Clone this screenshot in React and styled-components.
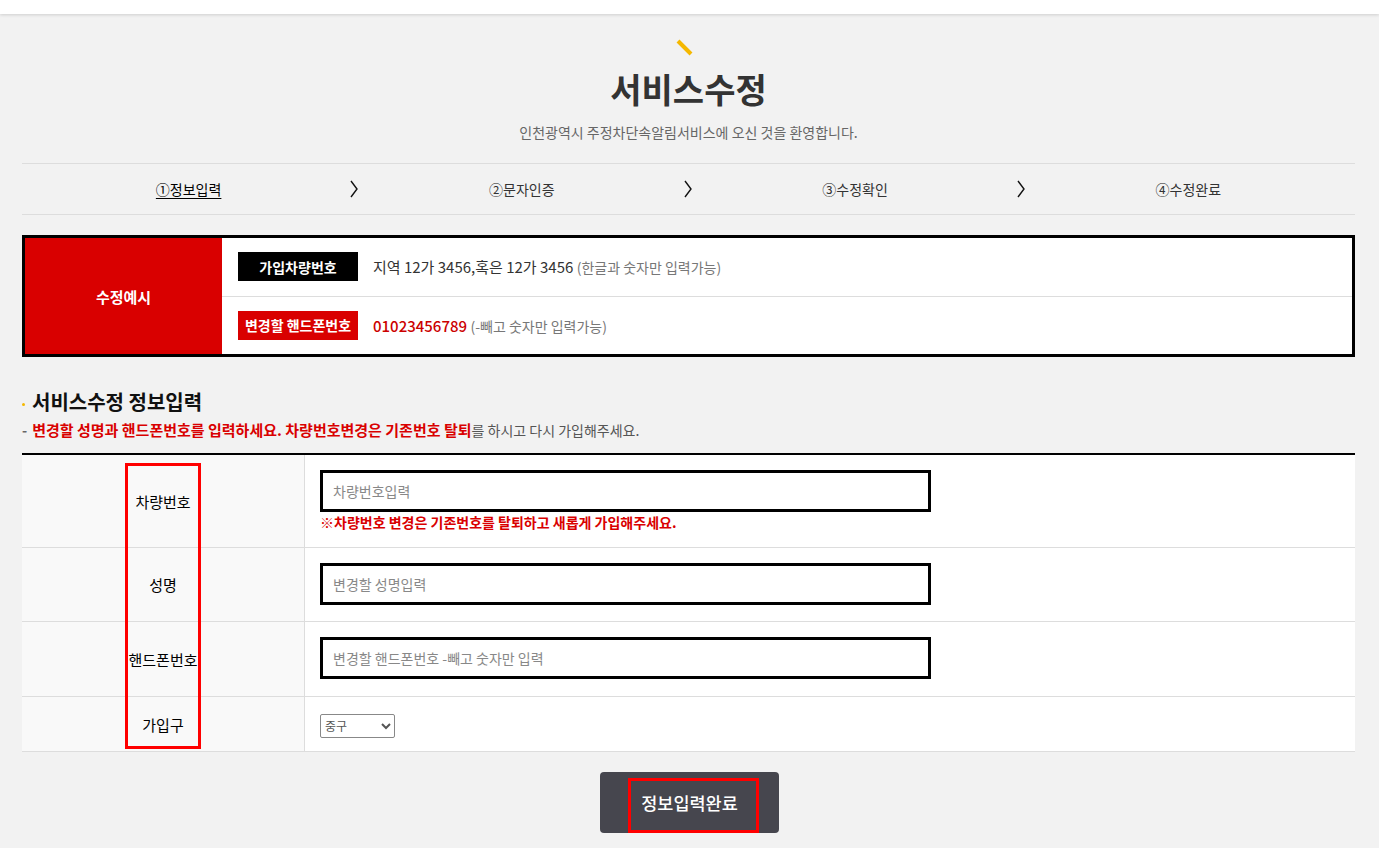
import styled, { createGlobalStyle } from "styled-components";

const GlobalStyle = createGlobalStyle`
  html, body {
    margin: 0;
    padding: 0;
    background: #f2f2f2;
    font-family: "Noto Sans CJK KR", "Noto Sans", sans-serif;
    color: #333;
  }
  * { box-sizing: border-box; }
`;

const steps = ["①정보입력", "②문자인증", "③수정확인", "④수정완료"];

const formRows = [
  { label: "차량번호", height: 93, placeholder: "차량번호입력", note: "※차량번호 변경은 기존번호를 탈퇴하고 새롭게 가입해주세요." },
  { label: "성명", height: 74, placeholder: "변경할 성명입력" },
  { label: "핸드폰번호", height: 75, placeholder: "변경할 핸드폰번호 -빼고 숫자만 입력" },
  { label: "가입구", height: 55, select: true },
];

const Chevron = () => (
  <svg width="10" height="18" viewBox="0 0 10 18">
    <polyline points="2,1 8,9 2,17" fill="none" stroke="#111" strokeWidth="1.4" />
  </svg>
);

const App = () => {
  return (
    <>
      <GlobalStyle />
      <TopBar />
      <Page>
        <Slash>
          <svg width="18" height="18" viewBox="0 0 18 18">
            <line x1="2" y1="2" x2="15" y2="15" stroke="#f5b800" strokeWidth="4" />
          </svg>
        </Slash>
        <Title>서비스수정</Title>
        <Subtitle>인천광역시 주정차단속알림서비스에 오신 것을 환영합니다.</Subtitle>

        <StepBar>
          {steps.map((s, i) => (
            <Step key={s}>
              <StepText $active={i === 0}>{s}</StepText>
              {i < steps.length - 1 && (
                <ChevronWrap>
                  <Chevron />
                </ChevronWrap>
              )}
            </Step>
          ))}
        </StepBar>

        <ExampleBox>
          <ExampleHead>수정예시</ExampleHead>
          <ExampleBody>
            <ExampleRow>
              <Badge $color="#000">가입차량번호</Badge>
              <ExampleText>
                지역 12가 3456,혹은 12가 3456 <Hint>(한글과 숫자만 입력가능)</Hint>
              </ExampleText>
            </ExampleRow>
            <ExampleRow>
              <Badge $color="#d90000">변경할 핸드폰번호</Badge>
              <ExampleText>
                <RedNum>01023456789</RedNum> <Hint>(-빼고 숫자만 입력가능)</Hint>
              </ExampleText>
            </ExampleRow>
          </ExampleBody>
        </ExampleBox>

        <SectionTitle>
          <Dot />
          서비스수정 정보입력
        </SectionTitle>
        <Notice>
          <Dash>-</Dash>
          <strong>변경할 성명과 핸드폰번호를 입력하세요. 차량번호변경은 기존번호 탈퇴</strong>
          <span>를 하시고 다시 가입해주세요.</span>
        </Notice>

        <FormTable>
          {formRows.map((r) => (
            <FormRow key={r.label} $h={r.height}>
              <LabelCell>{r.label}</LabelCell>
              <FieldCell>
                {r.select ? (
                  <Select defaultValue="중구">
                    <option>중구</option>
                  </Select>
                ) : (
                  <Input placeholder={r.placeholder} />
                )}
                {r.note && <Warn>{r.note}</Warn>}
              </FieldCell>
            </FormRow>
          ))}
          <LabelHighlight />
        </FormTable>

        <ButtonRow>
          <SubmitButton>
            정보입력완료
            <ButtonHighlight />
          </SubmitButton>
        </ButtonRow>
      </Page>
    </>
  );
};

export default App;

const TopBar = styled.div`
  height: 14px;
  background: #fff;
  box-shadow: 0 1px 3px rgba(0, 0, 0, 0.15);
`;

const Page = styled.div`
  margin: 0 24px 0 22px;
  padding-bottom: 40px;
`;

const Slash = styled.div`
  display: flex;
  justify-content: center;
  padding-top: 25px;
  padding-right: 7px;
  height: 43px;
`;

const Title = styled.h1`
  margin: 10px 0 0;
  text-align: center;
  font-size: 34px;
  font-weight: 700;
  line-height: 44px;
  color: #333;
`;

const Subtitle = styled.p`
  margin: 11px 0 0;
  text-align: center;
  font-size: 14px;
  line-height: 20px;
  color: #666;
`;

const StepBar = styled.div`
  margin-top: 21px;
  height: 52px;
  border-top: 1px solid #dddddd;
  border-bottom: 1px solid #dddddd;
  display: grid;
  grid-template-columns: repeat(4, 1fr);
`;

const Step = styled.div`
  position: relative;
  display: flex;
  align-items: center;
  justify-content: center;
`;

const StepText = styled.span`
  font-size: 14px;
  color: ${(p) => (p.$active ? "#000" : "#333")};
  text-decoration: ${(p) => (p.$active ? "underline" : "none")};
  text-underline-offset: 3px;
`;

const ChevronWrap = styled.span`
  position: absolute;
  right: -4px;
  top: 50%;
  transform: translateY(-50%);
  display: flex;
`;

const ExampleBox = styled.div`
  margin-top: 20px;
  display: flex;
  border: 3px solid #000;
  height: 122px;
  background: #fff;
`;

const ExampleHead = styled.div`
  width: 197px;
  background: #d90000;
  color: #fff;
  font-size: 15px;
  font-weight: 700;
  display: flex;
  align-items: center;
  justify-content: center;
`;

const ExampleBody = styled.div`
  flex: 1;
  display: flex;
  flex-direction: column;
`;

const ExampleRow = styled.div`
  flex: 1;
  display: flex;
  align-items: center;
  padding-left: 16px;
  gap: 15px;
  & + & {
    border-top: 1px solid #dddddd;
  }
`;

const Badge = styled.span`
  width: 120px;
  height: 29px;
  display: flex;
  align-items: center;
  justify-content: center;
  background: ${(p) => p.$color};
  color: #fff;
  font-size: 14px;
  font-weight: 700;
`;

const ExampleText = styled.span`
  font-size: 15px;
  color: #333;
`;

const Hint = styled.span`
  font-size: 14px;
  color: #777;
`;

const RedNum = styled.span`
  font-size: 15px;
  font-weight: 500;
  color: #cc0000;
`;

const SectionTitle = styled.h2`
  margin: 32px 0 0;
  display: flex;
  align-items: center;
  gap: 7px;
  font-size: 20px;
  font-weight: 700;
  color: #111;
  line-height: 26px;
`;

const Dot = styled.span`
  width: 3px;
  height: 3px;
  border-radius: 50%;
  background: #f5b800;
  margin-top: 4px;
`;

const Notice = styled.p`
  margin: 5px 0 0;
  font-size: 14px;
  line-height: 20px;
  color: #555;
  strong {
    font-size: 15px;
    color: #d90000;
    font-weight: 700;
  }
`;

const Dash = styled.span`
  color: #666;
  margin-right: 5px;
  font-weight: 700;
`;

const FormTable = styled.div`
  position: relative;
  margin-top: 13px;
  border-top: 2px solid #000;
  background: #fff;
`;

const FormRow = styled.div`
  display: grid;
  grid-template-columns: 283px 1fr;
  height: ${(p) => p.$h}px;
  border-bottom: 1px solid #dddddd;
`;

const LabelCell = styled.div`
  background: #f9f9f9;
  border-right: 1px solid #dddddd;
  display: flex;
  align-items: center;
  justify-content: center;
  font-size: 15px;
  color: #000;
`;

const FieldCell = styled.div`
  padding: 15px 0 0 15px;
`;

const Input = styled.input`
  display: block;
  width: 611px;
  height: 42px;
  border: 3px solid #000;
  padding: 0 10px;
  font-family: inherit;
  font-size: 14px;
  color: #333;
  outline: none;
  &::placeholder {
    color: #888;
  }
`;

const Warn = styled.p`
  margin: 0;
  font-size: 14px;
  font-weight: 700;
  color: #d90000;
  line-height: 20px;
`;

const Select = styled.select`
  width: 75px;
  height: 24px;
  font-family: inherit;
  font-size: 12px;
  color: #555;
  border: 1px solid #888;
  border-radius: 2px;
  background: #fff;
`;

const LabelHighlight = styled.div`
  position: absolute;
  left: 103px;
  top: 8px;
  width: 76px;
  height: 286px;
  border: 3px solid #ff0000;
  pointer-events: none;
`;

const ButtonRow = styled.div`
  display: flex;
  justify-content: center;
  margin-top: 20px;
`;

const SubmitButton = styled.button`
  position: relative;
  width: 179px;
  height: 61px;
  border: none;
  border-radius: 4px;
  background: #46464e;
  color: #fff;
  font-family: inherit;
  font-size: 17.5px;
  font-weight: 500;
  padding: 0;
  margin-left: 2px;
`;

const ButtonHighlight = styled.span`
  position: absolute;
  left: 28px;
  top: 6px;
  width: 131px;
  height: 55px;
  border: 3px solid #ff0000;
`;
